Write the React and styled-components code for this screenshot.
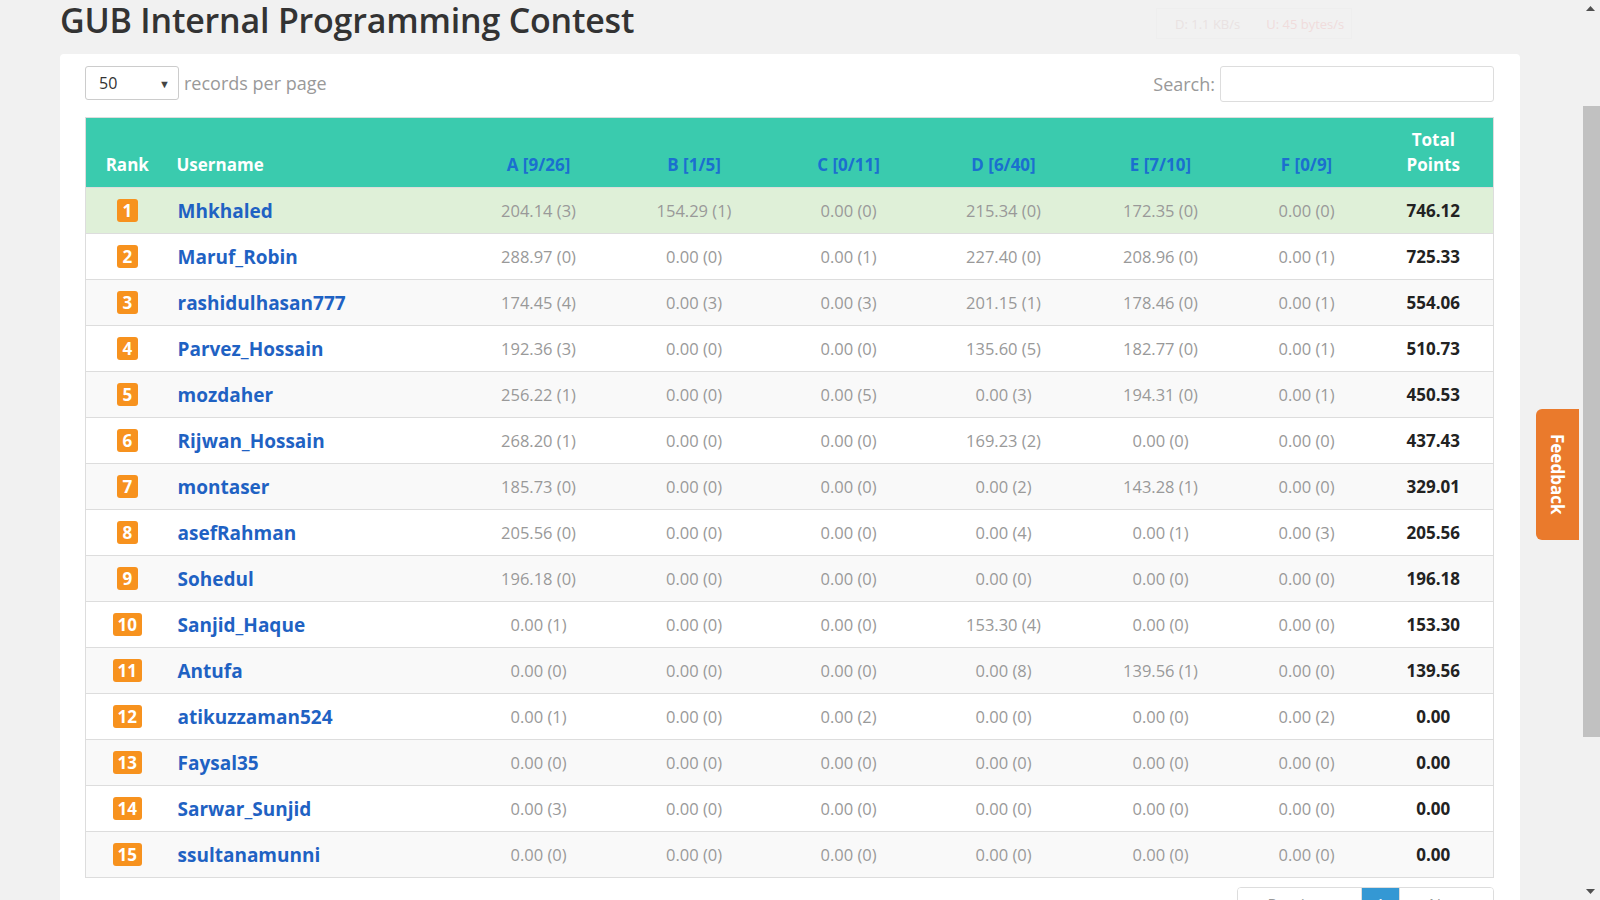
import React from 'react';
import styled, { createGlobalStyle } from 'styled-components';

const GlobalStyle = createGlobalStyle`
  html, body {
    margin: 0;
    padding: 0;
    background: #f1f1f1;
    overflow: hidden;
    font-family: 'Open Sans', 'Liberation Sans', sans-serif;
  }
`;

const Viewport = styled.div`
  display: flex;
  height: 100vh;
  width: 100vw;
`;

const Main = styled.div`
  position: relative;
  flex: 1;
  overflow: hidden;
`;

const Container = styled.div`
  width: 1460px;
  margin: 0 auto;
`;

const Title = styled.h1`
  margin: 0 0 14px;
  font-size: 34px;
  line-height: 40px;
  font-weight: 600;
  letter-spacing: -0.2px;
  color: #333;
`;

const Panel = styled.div`
  background: #fff;
  border-radius: 4px;
  padding: 10px 26px 30px 25px;
`;

const Toolbar = styled.div`
  display: flex;
  justify-content: space-between;
  align-items: center;
  margin-bottom: 15px;
  color: #999;
  font-size: 18px;
`;

const Length = styled.label`
  display: flex;
  align-items: center;
  gap: 5px;
`;

const Select = styled.div`
  width: 94px;
  height: 34px;
  box-sizing: border-box;
  border: 1px solid #ccc;
  border-radius: 3px;
  display: flex;
  align-items: center;
  justify-content: space-between;
  padding: 0 8px 0 13px;
  color: #333;
  font-size: 16px;
  span {
    font-size: 11px;
    color: #444;
  }
`;

const Search = styled.label`
  display: flex;
  align-items: center;
  gap: 5px;
  margin-top: 2px;
`;

const SearchInput = styled.div`
  width: 274px;
  height: 36px;
  box-sizing: border-box;
  border: 1px solid #ddd;
  border-radius: 3px;
`;

const Table = styled.table`
  width: 1408px;
  table-layout: fixed;
  border-collapse: collapse;
  border: 1px solid #ddd;
`;

const Head = styled.th`
  background: #3acbae;
  height: 70px;
  box-sizing: border-box;
  padding: 0 8px 10px;
  vertical-align: bottom;
  text-align: ${(p) => p.$align || 'center'};
  font-size: 17px;
  line-height: 25px;
  font-weight: 700;
  color: ${(p) => (p.$link ? '#1b6fcf' : '#fff')};
`;

const Row = styled.tr`
  height: 46px;
  border-top: 1px solid #ddd;
  background: ${(p) => (p.$first ? '#dff0d8' : p.$odd ? '#f9f9f9' : '#fff')};
`;

const Cell = styled.td`
  padding: 0 8px;
  text-align: center;
  vertical-align: middle;
  font-size: 16.5px;
  color: #999;
`;

const NameCell = styled(Cell)`
  text-align: left;
  padding-left: 9px;
  font-size: 19px;
  font-weight: 700;
  color: #1f62c3;
`;

const TotalCell = styled(Cell)`
  font-size: 17px;
  font-weight: 700;
  color: #222;
`;

const Badge = styled.span`
  display: inline-block;
  min-width: 21px;
  height: 23px;
  line-height: 23px;
  box-sizing: border-box;
  padding: 0 5px;
  border-radius: 3px;
  background: #f7921e;
  color: #fff;
  font-weight: 700;
  font-size: 17px;
`;

const Pager = styled.div`
  display: flex;
  justify-content: flex-end;
  margin-top: 9px;
`;

const PageList = styled.div`
  display: flex;
  border: 1px solid #ddd;
  border-radius: 4px;
  overflow: hidden;
`;

const PageButton = styled.div`
  height: 34px;
  line-height: 34px;
  padding: 0 ${(p) => (p.$active ? '14px' : '29px')};
  font-size: 16px;
  color: ${(p) => (p.$active ? '#fff' : '#999')};
  background: ${(p) => (p.$active ? '#3498d4' : '#fff')};
  & + & {
    border-left: 1px solid #ddd;
  }
`;

const Feedback = styled.div`
  position: absolute;
  right: 1px;
  top: 409px;
  width: 43px;
  height: 131px;
  border-radius: 6px 0 0 6px;
  background: #ea7a2c;
  color: #fff;
  font-weight: 700;
  font-size: 17px;
  writing-mode: vertical-rl;
  display: flex;
  align-items: center;
  justify-content: center;
`;

const Speed = styled.div`
  position: absolute;
  top: 8px;
  left: 1156px;
  width: 196px;
  height: 31px;
  box-sizing: border-box;
  border: 1px solid #eee;
  display: flex;
  align-items: center;
  gap: 26px;
  padding-left: 18px;
  font-size: 13px;
  color: #e9e2e2;
  b {
    font-weight: 400;
    color: #f0dcdc;
  }
`;

const ScrollBar = styled.div`
  width: 20px;
  background: #f1f1f1;
  display: flex;
  flex-direction: column;
  align-items: center;
`;

const Arrow = styled.div`
  height: 17px;
  display: flex;
  align-items: center;
  justify-content: center;
  flex-shrink: 0;
`;

const Track = styled.div`
  flex: 1;
  width: 100%;
  display: flex;
  flex-direction: column;
  align-items: flex-end;
`;

const Thumb = styled.div`
  margin-top: ${(p) => p.$top}px;
  width: 17px;
  height: ${(p) => p.$height}px;
  background: #c1c1c1;
`;

const problems = [
  ['A [9/26]', 156],
  ['B [1/5]', 155],
  ['C [0/11]', 154],
  ['D [6/40]', 156],
  ['E [7/10]', 158],
  ['F [0/9]', 134],
];

const rows = [
  ['Mhkhaled', ['204.14 (3)', '154.29 (1)', '0.00 (0)', '215.34 (0)', '172.35 (0)', '0.00 (0)'], '746.12'],
  ['Maruf_Robin', ['288.97 (0)', '0.00 (0)', '0.00 (1)', '227.40 (0)', '208.96 (0)', '0.00 (1)'], '725.33'],
  ['rashidulhasan777', ['174.45 (4)', '0.00 (3)', '0.00 (3)', '201.15 (1)', '178.46 (0)', '0.00 (1)'], '554.06'],
  ['Parvez_Hossain', ['192.36 (3)', '0.00 (0)', '0.00 (0)', '135.60 (5)', '182.77 (0)', '0.00 (1)'], '510.73'],
  ['mozdaher', ['256.22 (1)', '0.00 (0)', '0.00 (5)', '0.00 (3)', '194.31 (0)', '0.00 (1)'], '450.53'],
  ['Rijwan_Hossain', ['268.20 (1)', '0.00 (0)', '0.00 (0)', '169.23 (2)', '0.00 (0)', '0.00 (0)'], '437.43'],
  ['montaser', ['185.73 (0)', '0.00 (0)', '0.00 (0)', '0.00 (2)', '143.28 (1)', '0.00 (0)'], '329.01'],
  ['asefRahman', ['205.56 (0)', '0.00 (0)', '0.00 (0)', '0.00 (4)', '0.00 (1)', '0.00 (3)'], '205.56'],
  ['Sohedul', ['196.18 (0)', '0.00 (0)', '0.00 (0)', '0.00 (0)', '0.00 (0)', '0.00 (0)'], '196.18'],
  ['Sanjid_Haque', ['0.00 (1)', '0.00 (0)', '0.00 (0)', '153.30 (4)', '0.00 (0)', '0.00 (0)'], '153.30'],
  ['Antufa', ['0.00 (0)', '0.00 (0)', '0.00 (0)', '0.00 (8)', '139.56 (1)', '0.00 (0)'], '139.56'],
  ['atikuzzaman524', ['0.00 (1)', '0.00 (0)', '0.00 (2)', '0.00 (0)', '0.00 (0)', '0.00 (2)'], '0.00'],
  ['Faysal35', ['0.00 (0)', '0.00 (0)', '0.00 (0)', '0.00 (0)', '0.00 (0)', '0.00 (0)'], '0.00'],
  ['Sarwar_Sunjid', ['0.00 (3)', '0.00 (0)', '0.00 (0)', '0.00 (0)', '0.00 (0)', '0.00 (0)'], '0.00'],
  ['ssultanamunni', ['0.00 (0)', '0.00 (0)', '0.00 (0)', '0.00 (0)', '0.00 (0)', '0.00 (0)'], '0.00'],
];

const Triangle = ({ up }) => (
  <svg width="9" height="5" viewBox="0 0 9 5">
    <path d={up ? 'M0 5 L4.5 0 L9 5 Z' : 'M0 0 L4.5 5 L9 0 Z'} fill="#505050" />
  </svg>
);

const App = () => {
  return (
    <Viewport>
      <GlobalStyle />
      <Main>
        <Container>
          <Title>GUB Internal Programming Contest</Title>
          <Panel>
            <Toolbar>
              <Length>
                <Select>
                  50<span>▼</span>
                </Select>
                records per page
              </Length>
              <Search>
                Search:
                <SearchInput />
              </Search>
            </Toolbar>
            <Table>
              <colgroup>
                <col style={{ width: 83 }} />
                <col style={{ width: 292 }} />
                {problems.map(([p, w]) => (
                  <col key={p} style={{ width: w }} />
                ))}
                <col style={{ width: 120 }} />
              </colgroup>
              <thead>
                <tr>
                  <Head>Rank</Head>
                  <Head $align="left">Username</Head>
                  {problems.map(([p]) => (
                    <Head key={p} $link>
                      {p}
                    </Head>
                  ))}
                  <Head>
                    Total
                    <br />
                    Points
                  </Head>
                </tr>
              </thead>
              <tbody>
                {rows.map(([name, scores, total], i) => (
                  <Row key={name} $first={i === 0} $odd={i % 2 === 0}>
                    <Cell>
                      <Badge>{i + 1}</Badge>
                    </Cell>
                    <NameCell>{name}</NameCell>
                    {scores.map((s, j) => (
                      <Cell key={j}>{s}</Cell>
                    ))}
                    <TotalCell>{total}</TotalCell>
                  </Row>
                ))}
              </tbody>
            </Table>
            <Pager>
              <PageList>
                <PageButton>Previous</PageButton>
                <PageButton $active>1</PageButton>
                <PageButton>Next</PageButton>
              </PageList>
            </Pager>
          </Panel>
        </Container>
        <Speed>
          D: 1.1 KB/s <b>U: 45 bytes/s</b>
        </Speed>
        <Feedback>Feedback</Feedback>
      </Main>
      <ScrollBar>
        <Arrow>
          <Triangle up />
        </Arrow>
        <Track>
          <Thumb $top={89} $height={631} />
        </Track>
        <Arrow>
          <Triangle />
        </Arrow>
      </ScrollBar>
    </Viewport>
  );
};

export default App;
